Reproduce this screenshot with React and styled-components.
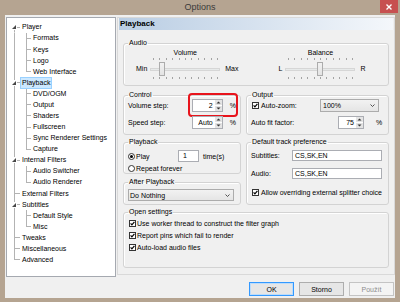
import React from "react";
import styled, { createGlobalStyle } from "styled-components";

const GlobalStyle = createGlobalStyle`
  html, body {
    margin: 0;
    padding: 0;
  }
  body {
    width: 400px;
    height: 302px;
    overflow: hidden;
    background: #b5a491;
    font-family: "Liberation Sans", Arial, sans-serif;
    font-size: 7px;
    color: #000;
  }
`;

const Window = styled.div`
  width: 400px;
  height: 302px;
  background: #b5a491;
  display: flex;
  flex-direction: column;
`;

const TitleBar = styled.div`
  height: 15px;
  display: grid;
  grid-template-columns: 1fr auto 1fr;
  align-items: start;
`;

const Title = styled.div`
  font-size: 9px;
  line-height: 15px;
  color: #3a3a3a;
`;

const CloseButton = styled.div`
  justify-self: end;
  width: 18px;
  height: 13px;
  margin-right: 2px;
  background: #c75050;
  display: flex;
  align-items: center;
  justify-content: center;
`;

const Client = styled.div`
  flex: 1;
  margin: 0 5px 4px;
  padding: 2px 0 0 1px;
  background: #f0f0f0;
  display: grid;
  grid-template-columns: 110px 278px;
  column-gap: 1px;
  align-items: start;
`;

/* ---------- tree ---------- */

const TreePanel = styled.div`
  height: 260px;
  box-sizing: border-box;
  border: 1px solid #a5a9b0;
  background: #fff;
  padding-top: 3.8px;
`;

const TreeRow = styled.div`
  height: 11.08px;
  display: flex;
  align-items: center;
  background: ${(p) => p.$lines};
`;

const Gutter = styled.div`
  width: ${(p) => p.$w}px;
  flex-shrink: 0;
  display: flex;
  align-items: center;
  padding-left: 4px;
  box-sizing: border-box;
`;

const TreeLabel = styled.span`
  padding: 0 1px;
  line-height: 10px;
  white-space: nowrap;
  border: 1px solid ${(p) => (p.$selected ? "#99d1ff" : "transparent")};
  background: ${(p) => (p.$selected ? "#cce8ff" : "transparent")};
`;

/* ---------- page ---------- */

const RightColumn = styled.div`
  display: flex;
  flex-direction: column;
`;

const Page = styled.div`
  height: 258px;
  box-sizing: border-box;
  border: 1px solid #d9d9d9;
  padding: 0 5px;
  display: flex;
  flex-direction: column;
`;

const PageHeader = styled.div`
  margin: 0 -4px;
  height: 12px;
  padding-left: 1px;
  background: linear-gradient(to right, #b9cde3, #f4f7fb);
  font-weight: bold;
  font-size: 8px;
  line-height: 12px;
`;

const Group = styled.fieldset`
  margin: ${(p) => p.$mt || 0}px 0 0;
  padding: ${(p) => p.$pt || 0}px 4px 0;
  height: ${(p) => p.$h}px;
  box-sizing: border-box;
  min-width: 0;
  border: 1px solid #d3d3d3;
  border-radius: 3px;
  box-shadow: inset 1px 1px 0 #fff;
`;

const Legend = styled.legend`
  padding: 0 1px;
  font-size: 7px;
  line-height: 8px;
`;

const Columns = styled.div`
  display: grid;
  grid-template-columns: 118px 143px;
  column-gap: 5px;
  row-gap: 3px;
  margin-top: 5px;
`;

const Stack = styled.div`
  display: flex;
  flex-direction: column;
  gap: 4px;
`;

/* ---------- sliders ---------- */

const SliderPair = styled.div`
  display: flex;
  gap: 40px;
  margin-left: 8px;
`;

const SliderRow = styled.div`
  display: flex;
  align-items: flex-end;
`;

const SliderEnd = styled.span`
  line-height: 14px;
  margin: 0 ${(p) => p.$mr || 0}px 3px ${(p) => p.$ml || 0}px;
`;

const SliderBody = styled.div`
  width: 70px;
  display: flex;
  flex-direction: column;
  align-items: center;
`;

const SliderLabel = styled.span`
  line-height: 8px;
  margin-bottom: 1px;
`;

const Ticks = styled.div`
  width: 65px;
  height: 2px;
  margin-top: ${(p) => p.$mt || 0}px;
  background: repeating-linear-gradient(to right, #a3a3a3 0 1px, transparent 1px 6.4px);
`;

const TrackArea = styled.div`
  position: relative;
  width: 70px;
  height: 14px;
  margin-top: 2px;
  display: flex;
  align-items: center;
`;

const Track = styled.div`
  width: 100%;
  height: 3px;
  box-sizing: border-box;
  border: 1px solid #d6d6d6;
  background: #e7eaea;
`;

const Thumb = styled.div`
  position: absolute;
  top: 0;
  width: 6px;
  height: 14px;
  box-sizing: border-box;
  border: 1px solid #acacac;
  background: linear-gradient(#f2f2f2, #e3e3e3);
`;

/* ---------- form parts ---------- */

const FieldRow = styled.div`
  position: relative;
  display: flex;
  align-items: center;
  height: ${(p) => p.$h || 13}px;
  margin-top: ${(p) => p.$mt || 0}px;
`;

const FieldLabel = styled.span`
  width: ${(p) => p.$w}px;
  flex-shrink: 0;
  white-space: nowrap;
  display: flex;
  align-items: center;
  gap: ${(p) => p.$gap || 0}px;
`;

const Percent = styled.span`
  margin-left: ${(p) => p.$ml}px;
`;

const SpinBox = styled.div`
  width: ${(p) => p.$w}px;
  height: 13px;
  box-sizing: border-box;
  border: 1px solid #abadb3;
  background: #fff;
  display: flex;
`;

const SpinText = styled.span`
  flex: 1;
  text-align: right;
  padding-right: 2px;
  line-height: 11px;
`;

const TextBox = styled.div`
  width: ${(p) => p.$w}px;
  height: ${(p) => p.$h || 11}px;
  box-sizing: border-box;
  border: 1px solid #abadb3;
  background: #fff;
  padding-left: ${(p) => p.$pl || 2}px;
  line-height: ${(p) => (p.$h || 11) - 2}px;
  margin-left: ${(p) => p.$ml || 0}px;
`;

const Select = styled.div`
  width: ${(p) => p.$w}px;
  height: ${(p) => p.$h || 13}px;
  box-sizing: border-box;
  border: 1px solid #acacac;
  background: linear-gradient(#f2f2f2, #e5e5e5);
  display: flex;
  align-items: center;
  justify-content: space-between;
  padding: 0 3px 0 ${(p) => p.$pl || 2}px;
`;

const Highlight = styled.div`
  position: absolute;
  left: 60px;
  top: -6px;
  width: 50px;
  height: 24px;
  box-sizing: border-box;
  border: 2px solid #e8141c;
  border-radius: 4px;
`;

const CheckBox = styled.span`
  width: 7px;
  height: 7px;
  box-sizing: border-box;
  border: 1px solid #333;
  background: #fff;
  flex-shrink: 0;
  margin-left: 1px;
  display: flex;
`;

const Radio = styled.span`
  width: 7px;
  height: 7px;
  box-sizing: border-box;
  border: 1px solid #333;
  border-radius: 50%;
  background: #fff;
  flex-shrink: 0;
  display: flex;
  align-items: center;
  justify-content: center;

  &::after {
    content: "";
    width: 3px;
    height: 3px;
    border-radius: 50%;
    background: ${(p) => (p.$checked ? "#000" : "transparent")};
  }
`;

const CheckItem = styled.div`
  display: flex;
  align-items: center;
  gap: ${(p) => p.$gap || 1}px;
  height: 12px;
  margin-top: ${(p) => p.$mt || 0}px;
  white-space: nowrap;
`;

const ButtonBar = styled.div`
  display: flex;
  justify-content: flex-end;
  gap: 5px;
  margin: 7px 1px 0 0;
`;

const DialogButton = styled.div`
  width: 45px;
  height: 14px;
  box-sizing: border-box;
  display: flex;
  align-items: center;
  justify-content: center;
  border: 1px solid ${(p) => (p.$default ? "#3399ff" : p.$disabled ? "#c4c4c4" : "#adadad")};
  box-shadow: ${(p) => (p.$default ? "inset 0 0 0 1px #bcdcfb" : "none")};
  background: ${(p) => (p.$disabled ? "#f4f4f4" : "#e6e6e6")};
  color: ${(p) => (p.$disabled ? "#8d8d8d" : "#000")};
`;

/* ---------- small drawings ---------- */

const Expander = () => (
  <svg width="6" height="6" viewBox="0 0 6 6">
    <rect width="6" height="6" fill="#fff" />
    <polygon points="5,1 5,5 1,5" fill="#474747" />
  </svg>
);

const Check = () => (
  <svg width="5" height="5" viewBox="0 0 5 5">
    <path d="M0.6 2.4 L1.9 3.8 L4.4 0.8" fill="none" stroke="#000" strokeWidth="1.2" />
  </svg>
);

const Chevron = () => (
  <svg width="5" height="3" viewBox="0 0 5 3">
    <path d="M0.5 0.5 L2.5 2.5 L4.5 0.5" fill="none" stroke="#404040" strokeWidth="0.9" />
  </svg>
);

const SpinArrows = () => (
  <svg width="7" height="11" viewBox="0 0 7 11">
    <rect x="0" y="0" width="7" height="5" fill="#e4e4e4" />
    <rect x="0" y="6" width="7" height="5" fill="#e4e4e4" />
    <polygon points="3.5,1.5 5.5,3.5 1.5,3.5" fill="#333" />
    <polygon points="1.5,7.5 5.5,7.5 3.5,9.5" fill="#333" />
  </svg>
);

/* ---------- data ---------- */

const tree = [
  { label: "Player", children: ["Formats", "Keys", "Logo", "Web Interface"] },
  {
    label: "Playback",
    selected: true,
    children: ["DVD/OGM", "Output", "Shaders", "Fullscreen", "Sync Renderer Settings", "Capture"],
  },
  { label: "Internal Filters", children: ["Audio Switcher", "Audio Renderer"] },
  { label: "External Filters" },
  { label: "Subtitles", children: ["Default Style", "Misc"] },
  { label: "Tweaks" },
  { label: "Miscellaneous" },
  { label: "Advanced" },
];

const LINE = "#b3b3b3";
const seg = (pos, size) => `linear-gradient(${LINE}, ${LINE}) ${pos} / ${size} no-repeat`;

const flattenTree = () => {
  const rows = [];
  tree.forEach((node, i) => {
    const first = i === 0;
    const last = i === tree.length - 1;
    const layers = [
      first ? seg("7px 100%", "1px 50%") : last ? seg("7px 0", "1px 50%") : seg("7px 0", "1px 100%"),
      seg("7px 50%", "6px 1px"),
    ];
    rows.push({ key: node.label, label: node.label, level: 0, expander: !!node.children, selected: node.selected, lines: layers.join(", ") });
    (node.children || []).forEach((child, j) => {
      const lastChild = j === node.children.length - 1;
      const childLayers = [
        seg("7px 0", "1px 100%"),
        lastChild ? seg("19px 0", "1px 50%") : seg("19px 0", "1px 100%"),
        seg("19px 50%", "5px 1px"),
      ];
      rows.push({ key: `${node.label}-${child}`, label: child, level: 1, lines: childLayers.join(", ") });
    });
  });
  return rows;
};

const Slider = ({ label, min, max, value }) => (
  <SliderRow>
    <SliderEnd $mr={3}>{min}</SliderEnd>
    <SliderBody>
      <SliderLabel>{label}</SliderLabel>
      <Ticks />
      <TrackArea>
        <Track />
        <Thumb style={{ left: `${Math.round(value * 64)}px` }} />
      </TrackArea>
      <Ticks $mt={1} />
    </SliderBody>
    <SliderEnd $ml={5}>{max}</SliderEnd>
  </SliderRow>
);

const App = () => {
  const rows = flattenTree();

  return (
    <Window>
      <GlobalStyle />
      <TitleBar>
        <span />
        <Title>Options</Title>
        <CloseButton>
          <svg width="6" height="6" viewBox="0 0 6 6">
            <path d="M0.5 0.5 L5.5 5.5 M5.5 0.5 L0.5 5.5" stroke="#fff" strokeWidth="1.4" />
          </svg>
        </CloseButton>
      </TitleBar>

      <Client>
        <TreePanel>
          {rows.map((row) => (
            <TreeRow key={row.key} $lines={row.lines}>
              <Gutter $w={row.level === 0 ? 13 : 24}>{row.expander && <Expander />}</Gutter>
              <TreeLabel $selected={row.selected}>{row.label}</TreeLabel>
            </TreeRow>
          ))}
        </TreePanel>

        <RightColumn>
          <Page>
            <PageHeader>Playback</PageHeader>

            <Group $mt={9} $pt={2} $h={47}>
              <Legend>Audio</Legend>
              <SliderPair>
                <Slider label="Volume" min="Min" max="Max" value={0.14} />
                <Slider label="Balance" min="L" max="R" value={0.5} />
              </SliderPair>
            </Group>

            <Columns>
              <Group $h={44}>
                <Legend>Control</Legend>
                <FieldRow>
                  <FieldLabel $w={64}>Volume step:</FieldLabel>
                  <SpinBox $w={31}>
                    <SpinText>2</SpinText>
                    <SpinArrows />
                  </SpinBox>
                  <Percent $ml={7}>%</Percent>
                  <Highlight />
                </FieldRow>
                <FieldRow $mt={4}>
                  <FieldLabel $w={64}>Speed step:</FieldLabel>
                  <SpinBox $w={31}>
                    <SpinText>Auto</SpinText>
                    <SpinArrows />
                  </SpinBox>
                  <Percent $ml={7}>%</Percent>
                </FieldRow>
              </Group>

              <Group $h={44}>
                <Legend>Output</Legend>
                <FieldRow>
                  <FieldLabel $w={69} $gap={2}>
                    <CheckBox>
                      <Check />
                    </CheckBox>
                    Auto-zoom:
                  </FieldLabel>
                  <Select $w={59}>
                    <span>100%</span>
                    <Chevron />
                  </Select>
                </FieldRow>
                <FieldRow $mt={4}>
                  <FieldLabel $w={87}>Auto fit factor:</FieldLabel>
                  <SpinBox $w={26}>
                    <SpinText>75</SpinText>
                    <SpinArrows />
                  </SpinBox>
                  <Percent $ml={12}>%</Percent>
                </FieldRow>
              </Group>

              <Stack>
                <Group $h={36}>
                  <Legend>Playback</Legend>
                  <FieldRow $mt={4} $h={12}>
                    <FieldLabel $w={50} $gap={1}>
                      <Radio $checked />
                      Play
                    </FieldLabel>
                    <TextBox $w={21} $h={12} $pl={4}>
                      1
                    </TextBox>
                    <Percent $ml={4}>time(s)</Percent>
                  </FieldRow>
                  <FieldRow $mt={1} $h={11}>
                    <FieldLabel $w={80} $gap={1}>
                      <Radio />
                      Repeat forever
                    </FieldLabel>
                  </FieldRow>
                </Group>
                <Group $h={27}>
                  <Legend>After Playback</Legend>
                  <FieldRow $mt={3} $h={12}>
                    <Select $w={106} $h={12} $pl={1}>
                      <span>Do Nothing</span>
                      <Chevron />
                    </Select>
                  </FieldRow>
                </Group>
              </Stack>

              <Group $h={67}>
                <Legend>Default track preference</Legend>
                <FieldRow $mt={4} $h={11}>
                  <FieldLabel $w={41}>Subtitles:</FieldLabel>
                  <TextBox $w={90}>CS,SK,EN</TextBox>
                </FieldRow>
                <FieldRow $mt={7} $h={11}>
                  <FieldLabel $w={41}>Audio:</FieldLabel>
                  <TextBox $w={90}>CS,SK,EN</TextBox>
                </FieldRow>
                <CheckItem $mt={7} $gap={2}>
                  <CheckBox>
                    <Check />
                  </CheckBox>
                  Allow overriding external splitter choice
                </CheckItem>
              </Group>
            </Columns>

            <Group $mt={3} $pt={1} $h={60}>
              <Legend>Open settings</Legend>
              <CheckItem>
                <CheckBox>
                  <Check />
                </CheckBox>
                Use worker thread to construct the filter graph
              </CheckItem>
              <CheckItem>
                <CheckBox>
                  <Check />
                </CheckBox>
                Report pins which fail to render
              </CheckItem>
              <CheckItem>
                <CheckBox>
                  <Check />
                </CheckBox>
                Auto-load audio files
              </CheckItem>
            </Group>
          </Page>

          <ButtonBar>
            <DialogButton $default>OK</DialogButton>
            <DialogButton>Storno</DialogButton>
            <DialogButton $disabled>Použít</DialogButton>
          </ButtonBar>
        </RightColumn>
      </Client>
    </Window>
  );
};

export default App;
